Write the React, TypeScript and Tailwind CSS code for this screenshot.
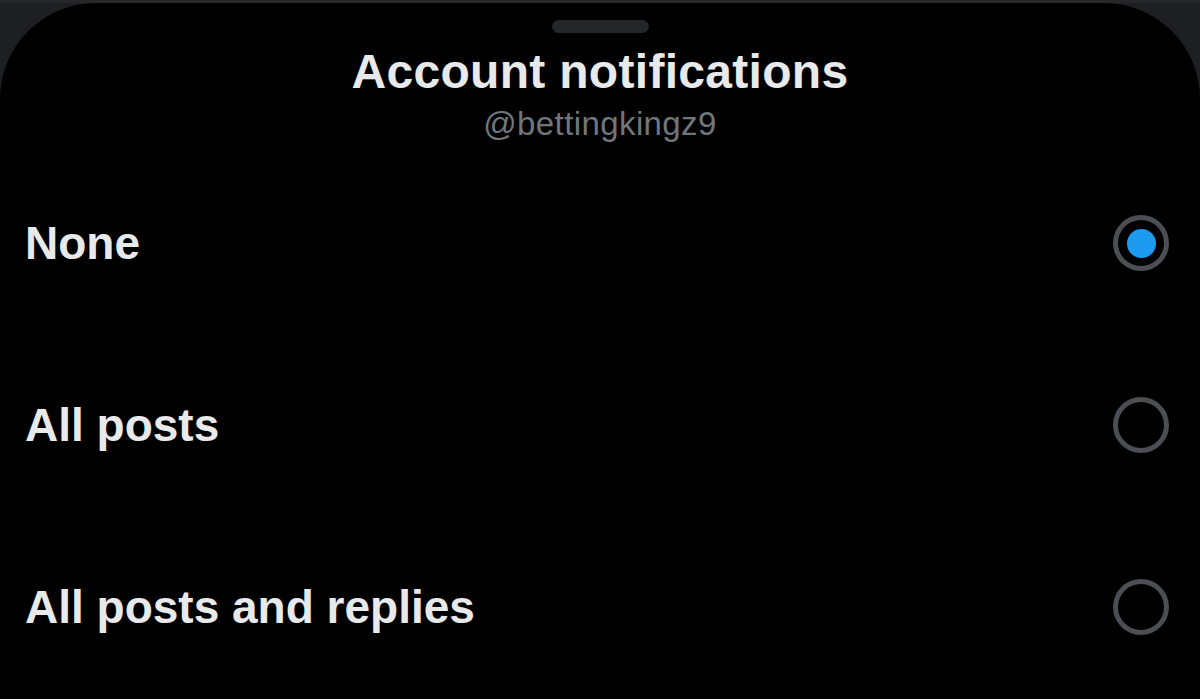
import { useState } from 'react';

const options = ['None', 'All posts', 'All posts and replies'];

function Radio({ checked }: { checked: boolean }) {
    return (
        <div className="w-[56px] h-[56px] rounded-full border-[5px] border-[#4b4e52] flex items-center justify-center shrink-0">
            {checked && <div className="w-[29px] h-[29px] rounded-full bg-[#1d9bf0]" />}
        </div>
    );
}

export default function App() {
    const [selected, setSelected] = useState(0);

    return (
        <div className="w-[1200px] h-[699px] bg-[#1e1f22] overflow-hidden flex flex-col" style={{ fontFamily: '"Liberation Sans", Arial, sans-serif' }}>
            {/* barra superior */}
            <div className="h-[3px] bg-[#26272b] shrink-0" />

            {/* folha */}
            <div className="flex-1 bg-black rounded-t-[96px] flex flex-col">
                <div className="flex justify-center pt-[17px]">
                    <div className="w-[97px] h-[13px] rounded-full bg-[#25262a]" />
                </div>

                <div className="flex flex-col items-center pt-[11px]">
                    <h1 className="text-[48px] leading-[56px] font-bold text-[#e7e9ea] tracking-[0.3px]">Account notifications</h1>
                    <p className="text-[33px] leading-[40px] text-[#71767b] mt-[4px] tracking-[0.4px]">@bettingkingz9</p>
                </div>

                <div className="flex flex-col pt-[8px]">
                    {options.map((label, i) => (
                        <button
                            key={label}
                            onClick={() => setSelected(i)}
                            className="h-[182px] flex items-center justify-between pl-[25px] pr-[31px] text-left"
                        >
                            <span className="text-[46px] leading-[55px] font-bold text-[#e7e9ea]">{label}</span>
                            <Radio checked={selected === i} />
                        </button>
                    ))}
                </div>
            </div>
        </div>
    );
}
